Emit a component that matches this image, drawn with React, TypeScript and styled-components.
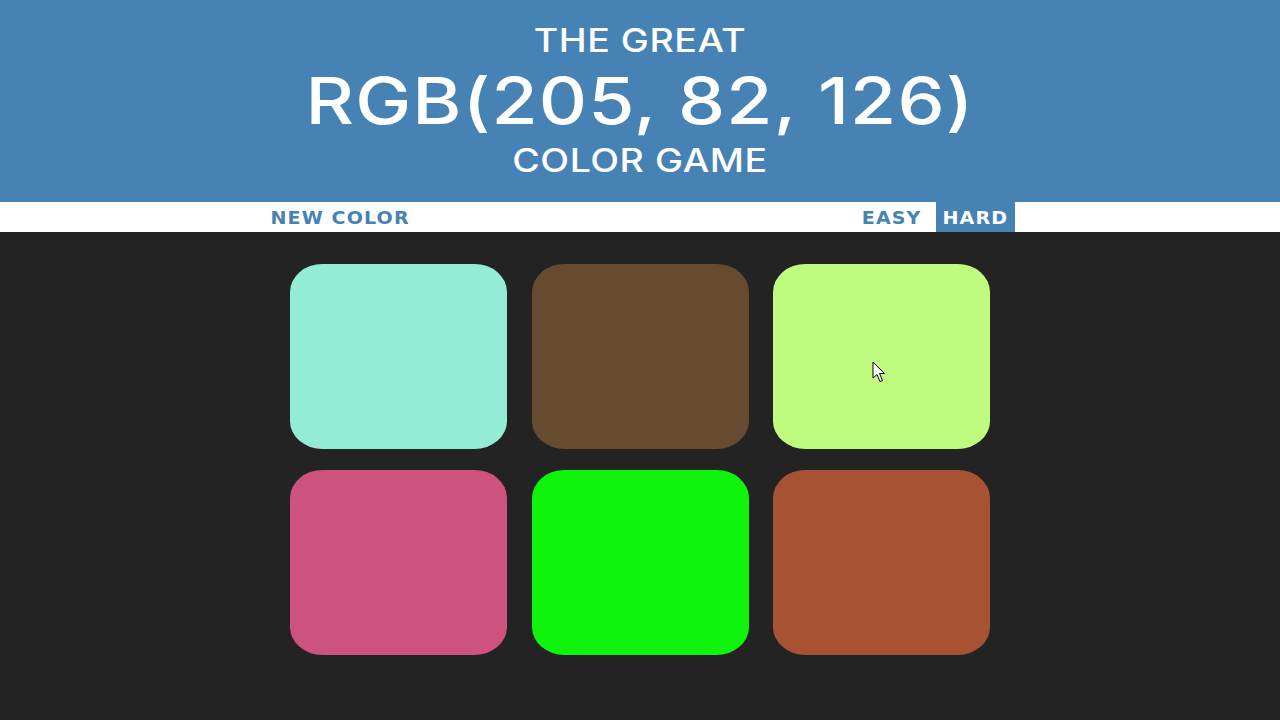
import React from 'react';
import styled, { createGlobalStyle } from 'styled-components';

const GlobalStyle = createGlobalStyle`
  html, body {
    margin: 0;
    padding: 0;
    background: #232323;
  }
  body {
    font-family: "Liberation Sans", Arial, sans-serif;
  }
`;

const Page = styled.div`
  position: relative;
  width: 1280px;
  height: 720px;
  background: #232323;
  overflow: hidden;
`;

const Header = styled.h1`
  margin: 0;
  padding: 21px 0;
  background: #4682b4;
  color: #ffffff;
  text-align: center;
  text-transform: uppercase;
  font-family: Inter, "Open Sans", sans-serif;
  font-weight: 500;
`;

const Line = styled.span<{ $big?: boolean }>`
  display: block;
  font-size: ${({ $big }) => ($big ? '64px' : '32px')};
  line-height: ${({ $big }) => ($big ? '80px' : '40px')};
  letter-spacing: ${({ $big }) => ($big ? '1px' : '0.5px')};
  transform: scaleX(1.17);
`;

const Stripe = styled.div`
  display: flex;
  align-items: stretch;
  height: 30px;
  background: #ffffff;
  padding: 0 265px 0 260px;
`;

const StripeButton = styled.button<{ $selected?: boolean; $width: number; $gap?: number }>`
  border: none;
  outline: none;
  padding: 2px 0 0;
  height: 100%;
  width: ${({ $width }) => $width}px;
  margin-left: ${({ $gap }) => $gap ?? 0}px;
  background: ${({ $selected }) => ($selected ? '#4682b4' : 'none')};
  color: ${({ $selected }) => ($selected ? '#ffffff' : '#4682b4')};
  font-family: "DejaVu Sans", Verdana, sans-serif;
  font-weight: 700;
  font-size: 17px;
  text-transform: uppercase;
  cursor: pointer;
`;

const Label = styled.span`
  display: inline-block;
  letter-spacing: 1px;
  transform: scaleX(1.12);
`;

const Spacer = styled.div`
  flex: 1;
`;

const Board = styled.div`
  display: grid;
  grid-template-columns: repeat(3, 217px);
  grid-auto-rows: 185px;
  column-gap: 24.5px;
  row-gap: 21px;
  width: 700px;
  margin: 32px auto 0;
`;

const Square = styled.div<{ $color: string }>`
  background: ${({ $color }) => $color};
  border-radius: 15%;
`;

const Cursor = styled.svg`
  position: absolute;
  left: 872px;
  top: 361px;
`;

const colors = [
  'rgb(147, 236, 211)',
  'rgb(102, 75, 49)',
  'rgb(191, 251, 127)',
  'rgb(205, 82, 126)',
  'rgb(16, 243, 12)',
  'rgb(166, 82, 51)',
];

export default function App() {
  return (
    <Page>
      <GlobalStyle />
      <Header>
        <Line>The Great</Line>
        <Line $big>RGB(205, 82, 126)</Line>
        <Line>Color Game</Line>
      </Header>
      <Stripe>
        <StripeButton $width={161}>
          <Label>New Color</Label>
        </StripeButton>
        <Spacer />
        <StripeButton $width={77}>
          <Label>Easy</Label>
        </StripeButton>
        <StripeButton $width={79} $gap={6} $selected>
          <Label>Hard</Label>
        </StripeButton>
      </Stripe>
      <Board>
        {colors.map((c) => (
          <Square key={c} $color={c} />
        ))}
      </Board>
      <Cursor width="16" height="24" viewBox="0 0 16 24">
        <path
          d="M1 1 L1 17 L5 13.5 L8 20.5 L10.5 19.5 L7.5 12.5 L12.5 12.5 Z"
          fill="#ffffff"
          stroke="#000000"
          strokeWidth="1"
          strokeLinejoin="round"
        />
      </Cursor>
    </Page>
  );
}
